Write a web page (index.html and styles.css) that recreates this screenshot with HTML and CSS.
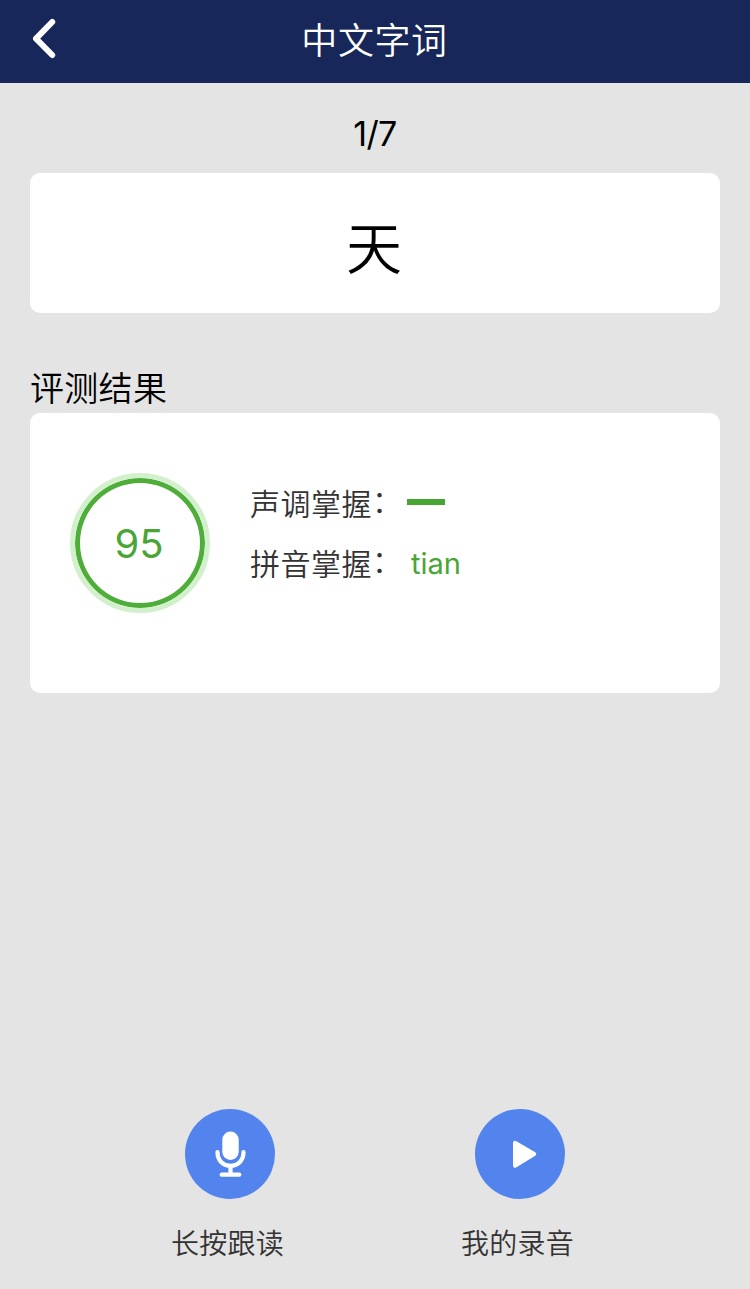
FILE: index.html
```html
<!DOCTYPE html>
<html lang="zh-CN">
<head>
  <meta charset="UTF-8">
  <title>中文字词</title>
  <link rel="stylesheet" href="styles.css">
</head>
<body>

  <div class="header">
    <svg class="back" width="26" height="42" viewBox="0 0 26 42">
      <path d="M22.2 4 L6 20.7 L22.2 37" fill="none" stroke="#fff" stroke-width="6" stroke-linecap="round" stroke-linejoin="round"/>
    </svg>
    <h1 class="title">中文字词</h1>
  </div>

  <div class="content">
    <div class="progress">1/7</div>
    <div class="card word">天</div>

    <h2 class="result-title">评测结果</h2>
    <div class="card result">
      <div class="score">95</div>
      <div class="detail">
        <div class="row">
          <span class="label">声调掌握<span class="colon">：</span></span>
          <span class="tone"></span>
        </div>
        <div class="row">
          <span class="label">拼音掌握<span class="colon">：</span></span>
          <span class="pinyin">tian</span>
        </div>
      </div>
    </div>
  </div>

  <div class="footer">
    <div class="action">
      <div class="circle">
        <svg width="90" height="90" viewBox="0 0 90 90">
          <rect x="37.3" y="22.5" width="16.4" height="28.5" rx="8.2" fill="#fff"/>
          <path d="M32.5 43 C32.5 61.5 58.5 61.5 58.5 43 M45.5 57 V65 M36.7 65.7 H54.3" fill="none" stroke="#fff" stroke-width="4.2" stroke-linecap="round"/>
        </svg>
      </div>
      <div class="action-text">长按跟读</div>
    </div>
    <div class="action">
      <div class="circle">
        <svg width="90" height="90" viewBox="0 0 90 90">
          <path d="M40 33.7 L59.2 45 L40 56.8 Z" fill="#fff" stroke="#fff" stroke-width="4" stroke-linejoin="round"/>
        </svg>
      </div>
      <div class="action-text">我的录音</div>
    </div>
  </div>

</body>
</html>
```

FILE: styles.css
```css
* {
  box-sizing: border-box;
}

body {
  display: flex;
  flex-direction: column;
  height: 1289px;
  margin: 0;
  background-color: #e4e4e4;
  font-family: Inter, "Noto Sans CJK SC", sans-serif;
  font-weight: 350;
  color: #000;
}

.header {
  display: flex;
  align-items: center;
  height: 83px;
  padding: 0 30px 6px;
  background-color: #182759;
}

.back {
  flex: none;
}

.title {
  flex: 1;
  margin: 0 27px 0 0;
  padding-top: 4px;
  text-align: center;
  font-size: 36px;
  line-height: 50px;
  font-weight: 350;
  letter-spacing: 0.6px;
  color: #fff;
}

.content {
  padding: 0 30px;
}

.progress {
  height: 90px;
  line-height: 102px;
  text-align: center;
  font-size: 34px;
  font-weight: 400;
  letter-spacing: -0.6px;
}

.card {
  background-color: #fff;
  border-radius: 10px;
}

.word {
  height: 140px;
  padding-right: 2px;
  line-height: 153px;
  text-align: center;
  font-size: 56px;
}

.result-title {
  height: 50px;
  margin: 50px 0 0;
  line-height: 52px;
  font-size: 34px;
  font-weight: 350;
  letter-spacing: 0.3px;
}

.result {
  display: flex;
  height: 280px;
  padding: 60px 40px;
}

.score {
  width: 140px;
  height: 140px;
  padding-right: 2px;
  border: 5px solid #d2f0cc;
  border-radius: 50%;
  box-shadow: inset 0 0 0 5px #4fae3a;
  line-height: 132px;
  text-align: center;
  font-size: 40px;
  font-weight: 400;
  color: #4aa536;
}

.detail {
  margin-left: 40px;
}

.row {
  display: flex;
  align-items: center;
  height: 60px;
  padding-bottom: 2px;
  font-size: 30px;
  color: #333;
}

.label {
  width: 157px;
  padding-top: 3px;
  line-height: 44px;
  white-space: nowrap;
  letter-spacing: 0.5px;
}

.colon {
  line-height: 1;
  vertical-align: 3px;
}

.tone {
  width: 38px;
  height: 6px;
  background-color: #47a632;
}

.pinyin {
  margin-left: 4px;
  padding-top: 2px;
  font-size: 29px;
  font-weight: 400;
  color: #4aa536;
}

.footer {
  display: flex;
  justify-content: center;
  gap: 140px;
  height: 180px;
  margin-top: auto;
}

.action {
  width: 150px;
  text-align: center;
}

.circle {
  width: 90px;
  height: 90px;
  margin: 0 auto;
  border-radius: 50%;
  background-color: #5384ed;
}

.action-text {
  margin: 25px 5px 0 0;
  line-height: 40px;
  font-size: 28px;
  letter-spacing: 0.3px;
  color: #333;
}
```
